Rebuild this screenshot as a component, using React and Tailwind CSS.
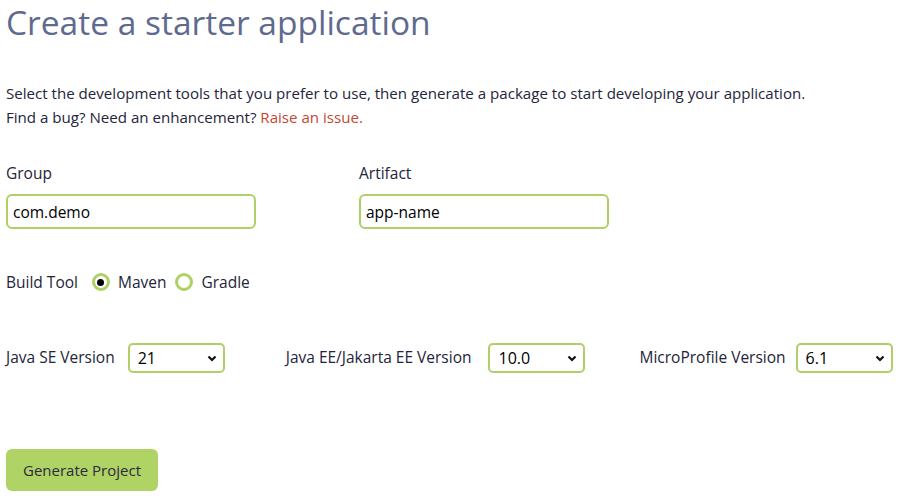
import { useState } from "react";

const font = { fontFamily: '"Open Sans", "Liberation Sans", sans-serif' };

const Select = ({ value, options }) => (
  <div className="relative w-[97px]">
    <select
      defaultValue={value}
      className="appearance-none w-full h-[30px] border-2 border-[#afd066] rounded-[5px] bg-white pl-[8px] pr-6 text-[16px] text-black outline-none"
    >
      {options.map((o) => (
        <option key={o}>{o}</option>
      ))}
    </select>
    <svg
      className="absolute right-[8px] top-[12px] pointer-events-none"
      width="10"
      height="7"
      viewBox="0 0 10 7"
    >
      <path d="M1.5 1.5 L5 5 L8.5 1.5" stroke="#111" strokeWidth="2.2" fill="none" />
    </svg>
  </div>
);

const Radio = ({ checked, label, onClick }) => (
  <label className="flex items-center gap-[8px] cursor-pointer" onClick={onClick}>
    <span className="w-[18px] h-[18px] rounded-full border-[3px] border-[#afd066] flex items-center justify-center bg-white">
      {checked && <span className="w-[7px] h-[7px] rounded-full bg-black" />}
    </span>
    <span>{label}</span>
  </label>
);

export default function App() {
  const [tool, setTool] = useState("maven");

  return (
    <div className="bg-white min-h-[502px] px-[6px] text-[#24243b]" style={font}>
      <h1 className="text-[33.5px] leading-[48px] -mt-[2px] text-[#5e6a8e]">Create a starter application</h1>

      <div className="mt-[35px] text-[15.1px] leading-[24px]">
        <p>Select the development tools that you prefer to use, then generate a package to start developing your application.</p>
        <p>
          Find a bug? Need an enhancement?{" "}
          <a href="#" className="text-[#c4482f]">Raise an issue.</a>
        </p>
      </div>

      <div className="mt-[32px] flex gap-[103px] text-[15.5px]">
        <div className="flex flex-col">
          <label className="leading-[24px]">Group</label>
          <input
            defaultValue="com.demo"
            className="mt-[9px] w-[250px] h-[35px] border-2 border-[#afd066] rounded-[6px] px-[5px] text-[15.5px] text-black outline-none"
          />
        </div>
        <div className="flex flex-col">
          <label className="leading-[24px]">Artifact</label>
          <input
            defaultValue="app-name"
            className="mt-[9px] w-[250px] h-[35px] border-2 border-[#afd066] rounded-[6px] px-[5px] text-[15.5px] text-black outline-none"
          />
        </div>
      </div>

      <div className="mt-[41px] flex items-center gap-[14px] text-[15.5px] leading-[24px]">
        <span>Build Tool</span>
        <div className="flex items-center gap-[9px]">
          <Radio checked={tool === "maven"} label="Maven" onClick={() => setTool("maven")} />
          <Radio checked={tool === "gradle"} label="Gradle" onClick={() => setTool("gradle")} />
        </div>
      </div>

      <div className="mt-[49px] flex items-center text-[15.5px]">
        <span>Java SE Version</span>
        <div className="ml-[13px]">
          <Select value="21" options={["21", "17", "11", "8"]} />
        </div>
        <span className="ml-[61px]">Java EE/Jakarta EE Version</span>
        <div className="ml-[17px]">
          <Select value="10.0" options={["10.0", "9.1", "8.0"]} />
        </div>
        <span className="ml-[54px]">MicroProfile Version</span>
        <div className="ml-[10px]">
          <Select value="6.1" options={["6.1", "5.0", "4.1"]} />
        </div>
      </div>

      <button className="mt-[76px] w-[152px] h-[42px] rounded-[6px] bg-[#afd365] text-[15px] text-[#2b2b3f]">
        Generate Project
      </button>
    </div>
  );
}
